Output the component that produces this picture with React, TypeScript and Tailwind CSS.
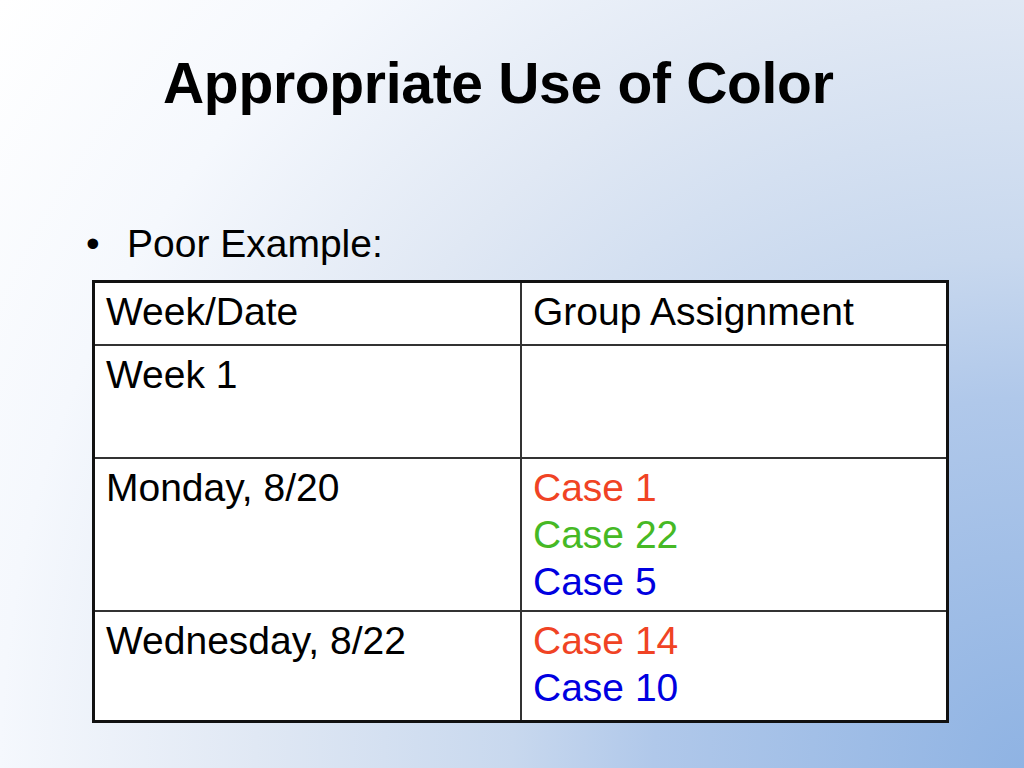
export default function App() {
  const rows = [
    { left: 'Week/Date', right: [{ t: 'Group Assignment', c: 'text-black' }], h: 'h-[63px]' },
    { left: 'Week 1', right: [], h: 'h-[113px]' },
    {
      left: 'Monday, 8/20',
      right: [
        { t: 'Case 1', c: 'text-[#f04324]' },
        { t: 'Case 22', c: 'text-[#46b925]' },
        { t: 'Case 5', c: 'text-[#0000e0]' },
      ],
      h: 'h-[153px]',
    },
    {
      left: 'Wednesday, 8/22',
      right: [
        { t: 'Case 14', c: 'text-[#f04324]' },
        { t: 'Case 10', c: 'text-[#0000e0]' },
      ],
      h: 'h-[108px]',
    },
  ]

  return (
    <div className="w-[1024px] h-[768px] overflow-hidden bg-[radial-gradient(circle_at_100%_100%,#8fb3e3_0px,#b0c8ea_370px,#c8d8ee_512px,#e0e8f4_768px,#f5f8fd_1024px,#ffffff_1280px)] font-['Liberation_Sans',Arial,sans-serif] text-black">
      <h1 className="pt-[55px] pl-[163px] text-[57px] leading-[57px] font-bold tracking-[-0.3px]">
        Appropriate Use of Color
      </h1>

      <div className="mt-[108px] flex text-[39px] leading-[47px]">
        <span className="w-[127px] pl-[86px]">•</span>
        <span>Poor Example:</span>
      </div>

      <div className="mt-[13px] ml-[92px] w-[857px] border-[3px] border-[#111] bg-white text-[39px] leading-[47px]">
        {rows.map((row, i) => (
          <div
            key={row.left}
            className={`flex ${row.h} ${i < rows.length - 1 ? 'border-b-2 border-[#333]' : ''}`}
          >
            <div className="w-[427px] shrink-0 border-r-2 border-[#333] pl-[11px] pt-[5px]">
              {row.left}
            </div>
            <div className="flex-1 pl-[11px] pt-[5px] flex flex-col">
              {row.right.map((r) => (
                <span key={r.t} className={r.c}>
                  {r.t}
                </span>
              ))}
            </div>
          </div>
        ))}
      </div>
    </div>
  )
}
